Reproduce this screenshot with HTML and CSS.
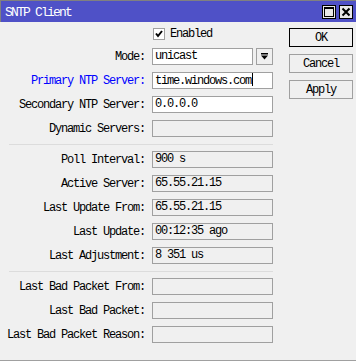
FILE: index.html
```html
<!DOCTYPE html>
<html lang="en">
<head>
  <meta charset="UTF-8">
  <title>SNTP Client</title>
  <link rel="stylesheet" href="styles.css">
</head>
<body>
  <div class="window">
    <div class="titlebar">
      <span class="title">SNTP Client</span>
      <div class="title-btns">
        <span class="tbtn">
          <svg width="10" height="10" viewBox="0 0 10 10"><rect x="0.5" y="0.5" width="9" height="9" fill="none" stroke="#000"/><rect x="0" y="0" width="10" height="2" fill="#000"/></svg>
        </span>
        <span class="tbtn">
          <svg width="10" height="10" viewBox="0 0 10 10"><path d="M1.5 1.5 L8.5 8.5 M8.5 1.5 L1.5 8.5" stroke="#000" stroke-width="2"/></svg>
        </span>
      </div>
    </div>
    <div class="content">
      <div class="form">
        <div class="row check-row">
          <span></span>
          <label class="check">
            <span class="box">
              <svg width="10" height="10" viewBox="0 0 10 10"><path d="M2 4.5 L4 7 L8 2" fill="none" stroke="#000" stroke-width="2"/></svg>
            </span>
            Enabled
          </label>
        </div>
        <div class="row">
          <span class="lbl">Mode:</span>
          <div class="combo">
            <span class="field edit">unicast</span>
            <span class="drop">
              <svg width="7" height="7" viewBox="0 0 7 7"><rect x="0" y="0" width="7" height="1.5" fill="#000"/><path d="M0 2.5 H7 L3.5 6.5 Z" fill="#000"/></svg>
            </span>
          </div>
        </div>
        <div class="row">
          <span class="lbl blue">Primary NTP Server:</span>
          <span class="field edit">time.windows.com<i class="caret"></i></span>
        </div>
        <div class="row">
          <span class="lbl">Secondary NTP Server:</span>
          <span class="field edit">0.0.0.0</span>
        </div>
        <div class="row">
          <span class="lbl">Dynamic Servers:</span>
          <span class="field"></span>
        </div>
        <div class="sep"></div>
        <div class="row">
          <span class="lbl">Poll Interval:</span>
          <span class="field">900 s</span>
        </div>
        <div class="row">
          <span class="lbl">Active Server:</span>
          <span class="field">65.55.21.15</span>
        </div>
        <div class="row">
          <span class="lbl">Last Update From:</span>
          <span class="field">65.55.21.15</span>
        </div>
        <div class="row">
          <span class="lbl">Last Update:</span>
          <span class="field">00:12:35 ago</span>
        </div>
        <div class="row">
          <span class="lbl">Last Adjustment:</span>
          <span class="field">8 351 us</span>
        </div>
        <div class="sep sep2"></div>
        <div class="row">
          <span class="lbl">Last Bad Packet From:</span>
          <span class="field"></span>
        </div>
        <div class="row">
          <span class="lbl">Last Bad Packet:</span>
          <span class="field"></span>
        </div>
        <div class="row">
          <span class="lbl">Last Bad Packet Reason:</span>
          <span class="field"></span>
        </div>
      </div>
      <div class="buttons">
        <button class="btn default">OK</button>
        <button class="btn">Cancel</button>
        <button class="btn">Apply</button>
      </div>
    </div>
  </div>
</body>
</html>
```

FILE: styles.css
```css
body {
  margin: 0;
  background: #f0f0f0;
  font-family: "Liberation Mono", monospace;
  font-size: 12px;
  letter-spacing: -1.2px;
  color: #000;
}
.window {
  width: 356px;
  height: 360px;
  border-bottom: 1px solid #a0a0a0;
  background: #f0f0f0;
  overflow: hidden;
}
.titlebar {
  height: 21px;
  border-top: 1px solid #808080;
  border-left: 1px solid #808080;
  background: #4f51c7;
  display: flex;
  align-items: center;
  justify-content: space-between;
}
.title {
  color: #fff;
  font-size: 13px;
  letter-spacing: -1.8px;
  padding-left: 4px;
  padding-top: 1px;
}
.title-btns {
  display: flex;
  gap: 3px;
  padding-right: 3px;
  padding-top: 1px;
}
.tbtn {
  width: 12px;
  height: 12px;
  border: 1px solid #000;
  background: #e8e8e8;
  display: flex;
  align-items: center;
  justify-content: center;
}
.content {
  display: flex;
}
.form {
  width: 273px;
  padding-top: 5px;
}
.row {
  display: grid;
  grid-template-columns: 146px 121px;
  column-gap: 6px;
  height: 17px;
  margin-bottom: 7px;
  align-items: center;
}
.lbl {
  text-align: right;
  white-space: nowrap;
  padding-right: 1px;
}
.blue {
  color: #0000ff;
}
.check-row {
  height: 14px;
}
.check {
  display: flex;
  align-items: center;
  gap: 5px;
  padding-left: 1px;
}
.box {
  width: 10px;
  height: 10px;
  border: 1px solid #a0a0a0;
  background: #fff;
  display: flex;
}
.field {
  box-sizing: border-box;
  height: 17px;
  border: 1px solid #a0a0a0;
  padding-left: 2px;
  line-height: 15px;
  white-space: nowrap;
  background: #f0f0f0;
}
.field.edit {
  background: #fff;
}
.caret {
  display: inline-block;
  width: 1px;
  height: 13px;
  background: #000;
  vertical-align: -2px;
  margin-left: 1px;
}
.combo {
  display: flex;
  gap: 3px;
}
.combo .field {
  width: 101px;
}
.drop {
  box-sizing: border-box;
  width: 17px;
  height: 17px;
  border: 1px solid #a0a0a0;
  background: #f0f0f0;
  display: flex;
  align-items: center;
  justify-content: center;
}
.sep {
  height: 1px;
  margin: 2px 0 6px 9px;
  background: #dcdcdc;
}
.sep2 {
  margin-top: 4px;
}
.buttons {
  display: flex;
  flex-direction: column;
  gap: 7px;
  padding-top: 6px;
  margin-left: 16px;
}
.btn {
  width: 64px;
  height: 19px;
  padding: 0;
  border: 1px solid #a0a0a0;
  background: #f0f0f0;
  font-family: "Liberation Mono", monospace;
  font-size: 12px;
  letter-spacing: -1.2px;
  color: #000;
}
.btn.default {
  border-color: #000;
}
```
